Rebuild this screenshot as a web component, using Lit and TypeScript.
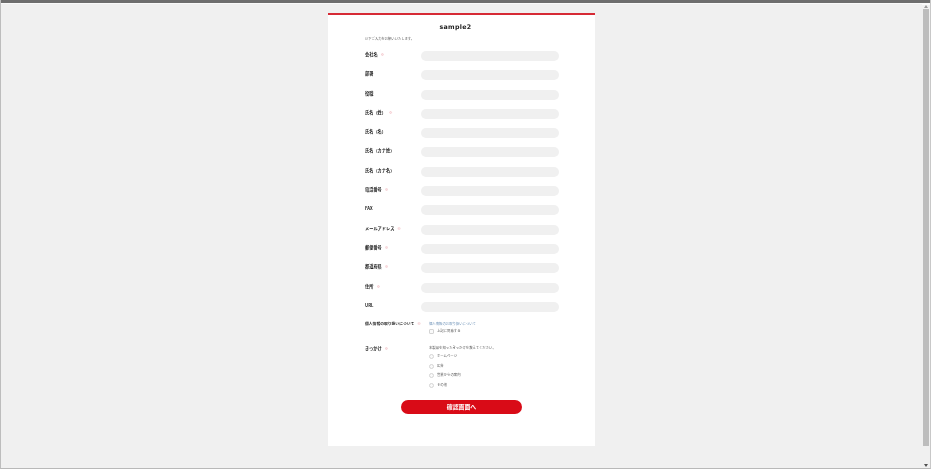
import { LitElement, html, css } from "lit";
import { customElement } from "lit/decorators.js";

const FIELDS: [string, boolean][] = [
  ["会社名", true], ["部署", false], ["役職", false], ["氏名（姓）", true], ["氏名（名）", false],
  ["氏名（カナ姓）", false], ["氏名（カナ名）", false], ["電話番号", true], ["FAX", false],
  ["メールアドレス", true], ["郵便番号", true], ["都道府県", true], ["住所", true], ["URL", false],
];
const SOURCES = ["ホームページ", "広告", "営業からの案内", "その他"];

@customElement("app-root")
export class AppRoot extends LitElement {
  static styles = css`
    :host { display: block; width: 931px; height: 469px; overflow: hidden; font-family: "Noto Sans CJK JP", "Liberation Sans", sans-serif; color: #222; }
    .window { box-sizing: border-box; width: 931px; height: 469px; display: flex; flex-direction: column; background: #f0f0f0; border-left: 1px solid #bdbdbd; border-right: 1px solid #c8c8c8; border-bottom: 1px solid #b8b8b8; filter: blur(0.3px); }
    .titlebar { height: 3px; flex: none; background: #6e6e6e; border-bottom: 1px solid #fafafa; }
    .body { flex: 1; display: flex; min-height: 0; }
    .page { flex: 1; padding-top: 9px; display: flex; justify-content: center; }
    .card { box-sizing: border-box; width: 267px; height: 433px; background: #fff; border-top: 2px solid #d62a35; padding: 6px 36px 0 37px; }
    h1 { margin: 0 13px 0 0; font: bold 6.3px/12px "DejaVu Sans", sans-serif; text-align: center; letter-spacing: 0.3px; color: #222; }
    .intro { margin: 3px 0 9px; font-size: 3.3px; line-height: 6px; color: #555; }
    .row { display: flex; height: 10px; margin-bottom: 9.3px; }
    .label { width: 56px; flex: none; font-size: 4.2px; font-weight: 700; line-height: 7px; white-space: nowrap; }
    .req { color: #e0707c; font-weight: 400; font-size: 3.6px; margin-left: 3px; }
    .input { width: 138px; height: 10px; border-radius: 5px; background: #f0f0f0; }
    .choice { display: flex; }
    .choice .label { width: 64px; }
    .privacy { height: 24px; margin-top: 0.5px; }
    .privacy .label { margin-top: -1px; font-size: 3.8px; }
    .link { font-size: 3.36px; line-height: 5px; color: #6f93b8; }
    .note { font-size: 3.36px; line-height: 5px; color: #555; }
    .opt { box-sizing: border-box; display: flex; align-items: flex-start; gap: 3px; height: 9.6px; padding-top: 3px; font-size: 3.36px; line-height: 5px; color: #555; }
    .privacy .opt { padding-top: 2px; }
    .box { box-sizing: border-box; width: 5px; height: 5px; margin-top: 1px; border: 0.5px solid #d4d4d4; background: #fafafa; flex: none; }
    .box.square { border-radius: 1px; }
    .box.round { border-radius: 50%; }
    .btn-wrap { display: flex; justify-content: center; margin: 11px 1px 0 0; }
    button { width: 121px; height: 14.5px; border: 0; padding: 0; border-radius: 8px; background: #d90b17; color: #fff; font: 700 5.9px/14.5px "Noto Sans CJK JP", sans-serif; }
    .scrollbar { width: 8px; flex: none; display: flex; flex-direction: column; align-items: center; background: #f0f0f0; border-top: 1px solid #fafafa; box-sizing: border-box; }
    .arrow { width: 8px; height: 6px; flex: none; display: flex; align-items: center; justify-content: center; }
    .arrow.up { height: 3px; }
    .thumb { width: 6px; height: 437px; flex: none; background: #bdbdbd; margin-top: 1px; }
    .track { flex: 1; }
    svg { display: block; }
  `;

  render() {
    return html`<div class="window">
      <div class="titlebar"></div>
      <div class="body">
        <div class="page">
          <div class="card">
            <h1>sample2</h1>
            <p class="intro">以下ご入力をお願いいたします。</p>
            ${FIELDS.map(([name, req]) => html`<div class="row">
              <div class="label">${name}${req ? html`<span class="req">※</span>` : ""}</div>
              <div class="input"></div>
            </div>`)}
            <div class="choice privacy">
              <div class="label">個人情報の取り扱いについて<span class="req">※</span></div>
              <div>
                <div class="link">個人情報のお取り扱いについて</div>
                <div class="opt"><span class="box square"></span>上記に同意する</div>
              </div>
            </div>
            <div class="choice">
              <div class="label">きっかけ<span class="req">※</span></div>
              <div>
                <div class="note">本製品を知ったきっかけを教えてください。</div>
                ${SOURCES.map((s) => html`<div class="opt"><span class="box round"></span>${s}</div>`)}
              </div>
            </div>
            <div class="btn-wrap"><button>確認画面へ</button></div>
          </div>
        </div>
        <div class="scrollbar">
          <div class="arrow up"><svg width="4" height="3" viewBox="0 0 4 3"><path d="M2 0 4 3H0z" fill="#9a9a9a"/></svg></div>
          <div class="thumb"></div>
          <div class="track"></div>
          <div class="arrow"><svg width="4" height="3" viewBox="0 0 4 3"><path d="M0 0h4L2 3z" fill="#505050"/></svg></div>
        </div>
      </div>
    </div>`;
  }
}
